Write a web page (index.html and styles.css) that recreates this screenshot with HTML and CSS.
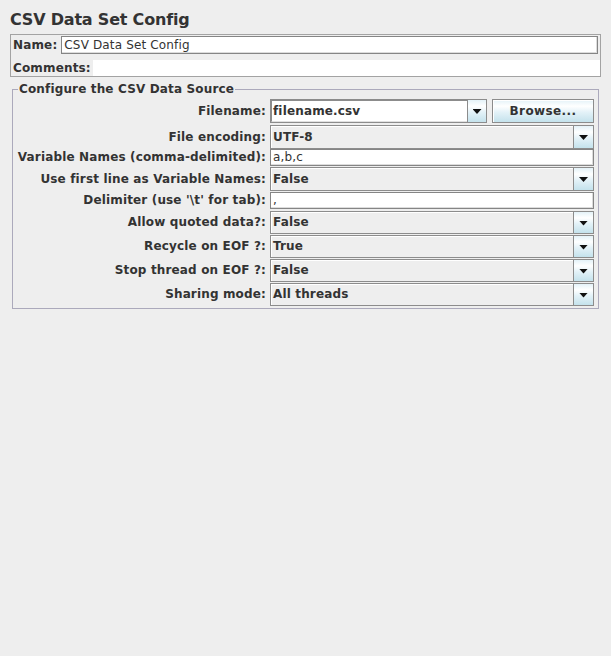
FILE: index.html
```html
<!DOCTYPE html>
<html>
<head>
<meta charset="utf-8">
<title>CSV Data Set Config</title>
<link rel="stylesheet" href="styles.css">
</head>
<body>
<div class="title">CSV Data Set Config</div>
<div class="namebox">
  <div class="name-row">
    <span class="lbl">Name:</span>
    <div class="tf name-tf">CSV Data Set Config</div>
  </div>
  <div class="comments-row">
    <span class="lbl">Comments:</span>
    <div class="ta"></div>
  </div>
</div>
<fieldset class="group">
  <legend>Configure the CSV Data Source</legend>
  <div class="grid">
    <div class="lbl r h24">Filename:</div>
    <div class="file-cell">
      <div class="ecombo">
        <div class="etext">filename.csv</div>
        <div class="arrow"><span class="tri"></span></div>
      </div>
      <div class="btn">Browse...</div>
    </div>

    <div class="lbl r h24">File encoding:</div>
    <div class="combo tall"><div class="val">UTF-8</div><div class="arrow"><span class="tri"></span></div></div>

    <div class="lbl r h17">Variable Names (comma-delimited):</div>
    <div class="tf small">a,b,c</div>

    <div class="lbl r h24">Use first line as Variable Names:</div>
    <div class="combo tall"><div class="val">False</div><div class="arrow"><span class="tri"></span></div></div>

    <div class="lbl r h17">Delimiter (use '\t' for tab):</div>
    <div class="tf small">,</div>

    <div class="lbl r h23">Allow quoted data?:</div>
    <div class="combo"><div class="val">False</div><div class="arrow"><span class="tri"></span></div></div>

    <div class="lbl r h23">Recycle on EOF ?:</div>
    <div class="combo"><div class="val">True</div><div class="arrow"><span class="tri"></span></div></div>

    <div class="lbl r h23">Stop thread on EOF ?:</div>
    <div class="combo"><div class="val">False</div><div class="arrow"><span class="tri"></span></div></div>

    <div class="lbl r h23">Sharing mode:</div>
    <div class="combo"><div class="val">All threads</div><div class="arrow"><span class="tri"></span></div></div>
  </div>
</fieldset>
</body>
</html>
```
FILE: styles.css
```css
* { box-sizing: border-box; }
html { background: #eeeeee; }
body {
  margin: 0;
  width: 611px;
  height: 656px;
  background: #eeeeee;
  font-family: "DejaVu Sans", sans-serif;
  font-size: 12px;
  color: #333333;
}
.title {
  margin: 10px 0 4px 10px;
  font-size: 16px;
  font-weight: bold;
  letter-spacing: -0.2px;
  line-height: 20px;
  height: 20px;
}
.namebox {
  margin: 0 10px;
  height: 43px;
  border: 1px solid #a3a3a3;
  padding: 1px 2px 0 2px;
}
.lbl {
  font-weight: bold;
  white-space: nowrap;
  letter-spacing: 0.15px;
}
.name-row {
  display: flex;
  align-items: center;
  gap: 4px;
  height: 18px;
}
.tf {
  background: #ffffff;
  border: 1px solid #858585;
  box-shadow: inset -1px -1px 0 #dcdcdc;
  padding-left: 2px;
  white-space: nowrap;
  overflow: hidden;
  letter-spacing: 0.15px;
}
.name-tf {
  flex: 1;
  height: 18px;
  line-height: 16px;
}
.comments-row {
  display: flex;
  align-items: center;
  gap: 2px;
  height: 16px;
  margin-top: 6px;
  margin-right: -2px;
}
.ta {
  flex: 1;
  height: 16px;
  background: #ffffff;
}
.group {
  margin: 5px 12px 0 12px;
  border: 1px solid #aba9bb;
  padding: 3px 4px 1px 0;
  min-width: 0;
}
.group legend {
  margin-left: 5px;
  padding: 0 1px;
  font-weight: bold;
  letter-spacing: 0.15px;
  line-height: 14px;
}
.grid {
  display: grid;
  grid-template-columns: 253px 1fr;
  grid-template-rows: 26px 24px 18px 25px 19px 24px 24px 24px 24px;
  column-gap: 4px;
}
.r {
  text-align: right;
  align-self: start;
}
.h24 { line-height: 24px; }
.h23 { line-height: 23px; }
.h17 { line-height: 17px; }
.tf.small {
  height: 17px;
  line-height: 15px;
}
.file-cell {
  display: flex;
  gap: 5px;
  height: 24px;
}
.ecombo {
  display: flex;
  width: 217px;
  height: 24px;
  border: 1px solid #8c8c8c;
  background: #ffffff;
}
.etext {
  flex: 1;
  font-weight: bold;
  letter-spacing: 0.15px;
  padding-left: 1px;
  border-top: 1px solid #8c8c8c;
  border-left: 1px solid #8c8c8c;
  border-bottom: 1px solid #e0e0e0;
  line-height: 20px;
}
.btn {
  flex: 1;
  height: 24px;
  border: 1px solid #8c8c8c;
  background: linear-gradient(to bottom, #e4f2f8 0%, #ffffff 28%, #e4f2f8 55%, #c4e2ec 100%);
  box-shadow: inset 1px 1px 0 #ffffff;
  font-weight: bold;
  text-align: center;
  line-height: 22px;
  letter-spacing: 0.4px;
}
.combo {
  display: flex;
  height: 23px;
  border: 1px solid #8c8c8c;
  background: #eeeeee;
  box-shadow: inset 1px 1px 0 #ffffff;
}
.combo.tall { height: 24px; }
.val {
  flex: 1;
  font-weight: bold;
  letter-spacing: 0.15px;
  padding-left: 2px;
  line-height: 21px;
}
.combo.tall .val { line-height: 22px; }
.arrow {
  width: 20px;
  border-left: 1px solid #8c8c8c;
  background: linear-gradient(to bottom, #e4f2f8 0%, #ffffff 28%, #e4f2f8 55%, #c4e2ec 100%);
  display: flex;
  align-items: center;
  justify-content: center;
}
.ecombo .arrow { width: 19px; }
.tri {
  display: block;
  width: 9px;
  height: 5px;
  margin-top: 1px;
  background: #111111;
  clip-path: polygon(0 0, 100% 0, 50% 100%);
}
```
